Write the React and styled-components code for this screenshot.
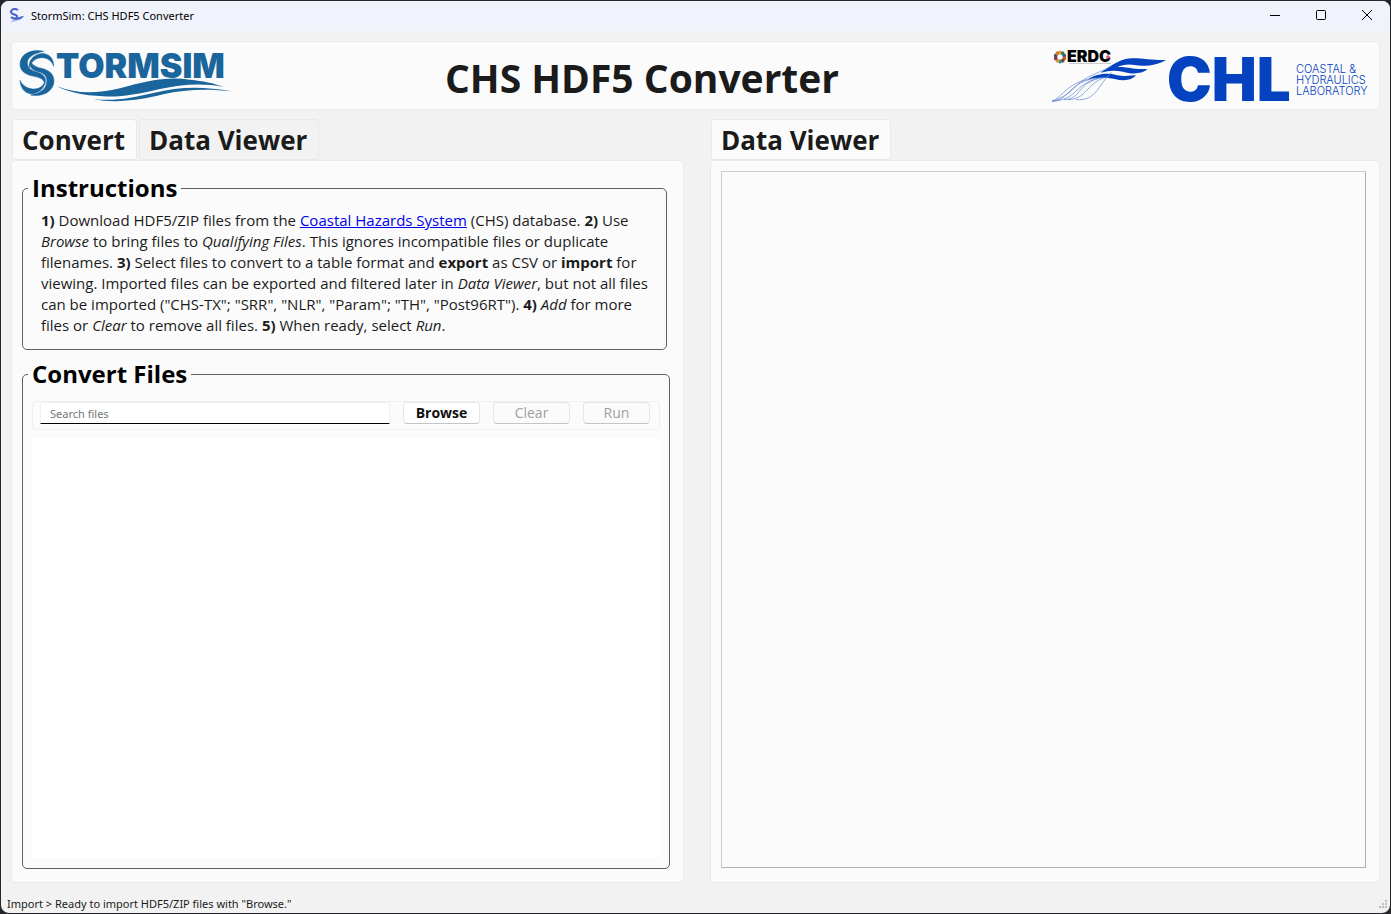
import React from "react";
import styled, { createGlobalStyle } from "styled-components";

const GlobalStyle = createGlobalStyle`
  *, *::before, *::after { box-sizing: border-box; }
  body {
    margin: 0;
    background: #26262a;
    color: #1b1b1b;
    font-family: "Open Sans", "Noto Sans", sans-serif;
  }
`;

const Window = styled.div`
  display: flex;
  flex-direction: column;
  min-height: 100vh;
  border: 1px solid #26262a;
  border-radius: 9px;
  background: #f2f2f2;
  overflow: hidden;
`;

const TitleBar = styled.header`
  display: flex;
  align-items: center;
  height: 30px;
  padding-left: 8px;
  background: #f0f3fb;
  color: #000;
  font-family: "Noto Sans", sans-serif;
  font-size: 11px;
  line-height: 16px;
`;

const WindowTitle = styled.span`
  flex: 1;
  padding-left: 6px;
`;

const WindowButton = styled.button`
  display: flex;
  align-items: center;
  justify-content: center;
  width: 46px;
  height: 28px;
  margin-bottom: 2px;
  padding: 0;
  border: 0;
  background: none;
`;

const Content = styled.main`
  display: flex;
  flex: 1;
  flex-direction: column;
  gap: 9px;
  padding: 10px 10px 0;
`;

const Banner = styled.section`
  display: flex;
  align-items: center;
  justify-content: space-between;
  height: 69px;
  padding: 0 8px;
  border: 1px solid #eaeaea;
  border-radius: 4px;
  background: #fbfbfb;
`;

const BannerTitle = styled.h1`
  margin: 0;
  padding-top: 4px;
  font-size: 39px;
  line-height: 48px;
  white-space: nowrap;
`;

const Columns = styled.div`
  display: grid;
  flex: 1;
  grid-template-columns: 673fr 670fr;
  gap: 26px;
`;

const Column = styled.section`
  display: flex;
  flex-direction: column;
  min-width: 0;
`;

const TabList = styled.div`
  display: flex;
  gap: 2px;
  padding-left: 1px;
`;

const Tab = styled.button`
  height: 41px;
  padding: 0 11px 0 9px;
  border: 1px solid #e8e8e8;
  border-radius: 3px;
  background: ${(p) => (p["aria-selected"] ? "#fbfbfb" : "#f2f2f2")};
  color: inherit;
  font-family: inherit;
  font-size: 26px;
  font-weight: 700;
  line-height: 38px;
  white-space: nowrap;
`;

const Panel = styled.div`
  display: flex;
  flex: 1;
  flex-direction: column;
  gap: 9px;
  padding: ${(p) => (p.$viewer ? "10px 13px 14px 10px" : "12px 13px 13px 10px")};
  border: 1px solid #eaeaea;
  border-radius: 4px;
  background: #fbfbfb;
`;

const Group = styled.fieldset`
  display: flex;
  flex: ${(p) => (p.$grow ? "1" : "none")};
  flex-direction: column;
  gap: 8px;
  min-width: 0;
  margin: ${(p) => (p.$grow ? "0" : "0 3px 0 0")};
  padding: ${(p) => (p.$grow ? "12px 9px 10px" : "7px 18px 13px")};
  border: 1px solid #606060;
  border-radius: 5px;
`;

const GroupTitle = styled.legend`
  margin-left: ${(p) => (p.$grow ? "-4px" : "-13px")};
  padding: 0 4px;
  color: #000;
  font-size: 24px;
  font-weight: 700;
  line-height: 30px;
`;

const Instructions = styled.p`
  margin: 0;
  font-size: 15px;
  line-height: 21px;

  a { color: #0000ee; }
`;

const FileBar = styled.div`
  display: flex;
  align-items: flex-start;
  gap: 13px;
  height: 29px;
  padding: 0 9px 0 7px;
  border: 1px solid #f0f0f0;
  border-radius: 4px;
`;

const Search = styled.input`
  flex: 1;
  min-width: 0;
  height: 22px;
  padding: 0 9px;
  border: 1px solid #f0f0f0;
  border-bottom: 1px solid #000;
  border-radius: 3px 3px 0 0;
  background: #fff;
  font-family: "Noto Sans", sans-serif;
  font-size: 11px;

  &::placeholder { color: #767676; opacity: 1; }
`;

const Action = styled.button`
  width: ${(p) => (p.$narrow ? "67px" : "77px")};
  height: 22px;
  padding: 0;
  border: 1px solid #e6e6e6;
  border-bottom-color: #c4c4c4;
  border-radius: 4px;
  background: #fff;
  color: #111;
  font-family: inherit;
  font-size: 14px;
  font-weight: 700;
  line-height: 20px;

  &:disabled {
    background: #fbfbfb;
    color: #a0a0a0;
    font-weight: 400;
  }
`;

const FileList = styled.div`
  flex: 1;
  border-radius: 3px;
  background: #fff;
`;

const DataFrame = styled.div`
  flex: 1;
  border: 1px solid #cecece;
  border-right-color: #b0b0b0;
  border-bottom-color: #b0b0b0;
`;

const StatusBar = styled.footer`
  display: flex;
  align-items: center;
  justify-content: space-between;
  height: 30px;
  padding: 12px 2px 0 6px;
  font-family: "Noto Sans", sans-serif;
  font-size: 11px;
  line-height: 18px;
`;

const Brand = styled.svg`
  display: block;
  flex: none;
  overflow: visible;
  font-family: Inter, "Liberation Sans", sans-serif;
`;

const swirl = [
  "M90 19C50 10 18 28 18 58C18 82 40 90 60 94C80 98 92 104 92 120C100 98 88 86 68 81C50 76 40 68 40 52C42 36 62 24 90 19Z",
  "M46 68C42 38 72 22 92 26C110 30 119 44 119 64C114 48 100 38 84 38C64 38 52 50 46 68Z",
  "M50 150C86 158 120 138 120 108C120 84 100 74 82 70C68 66 56 62 50 50C44 70 58 76 76 81C94 86 100 98 98 112C96 134 76 146 50 150Z",
  "M18 106C20 136 38 147 56 147C78 142 92 128 92 112C84 126 74 133 56 132C38 130 26 122 18 106Z",
];

function AppIcon() {
  return (
    <svg width="16" height="16" viewBox="0 0 16 16" aria-hidden="true">
      <path d="M9 2C6 0 2 1 2 4C2 7 8 6 8 8.500C8 11 4 11 2 9" fill="none" stroke="#4a62c8" strokeWidth="2" />
      <path d="M2 14C4 13 6 9 10 9C12 9 12 8 15 8C12 13 8 11 5 13Z" fill="#4c6ad0" />
      <path d="M1 15C4 11 6 12 10 12C7 14 4 13 1 15Z" fill="#b8c8ee" />
    </svg>
  );
}

function StormSimLogo() {
  return (
    <Brand width="214" height="54" viewBox="20 48 214 54" fill="#1b659d" role="img" aria-label="StormSim">
      <g transform="translate(14 44) scale(.33333)" stroke="#1b659d" strokeWidth="1.500">
        {swirl.map((d) => <path key={d} d={d} />)}
      </g>
      <text x="56" y="77" fontSize="34" fontWeight="900">TORMSIM</text>
      <g transform="scale(.33333)">
        <path d="M172 256C230 280 290 278 360 262C440 240 500 226 570 236C610 240 640 246 672 258C600 244 540 252 480 264C420 278 360 290 310 286C250 284 200 272 172 256Z" />
        <path d="M280 294C340 302 400 290 460 276C540 256 610 256 696 271C620 262 550 266 490 280C420 298 340 308 280 294Z" />
      </g>
    </Brand>
  );
}

const sealColors = ["#d9a441", "#3f7d46", "#2c5f8a", "#c5542f", "#6f4a2d", "#2f8a9a", "#e0a030", "#a03040", "#34567a", "#d07a30"];

function ChlLogo() {
  return (
    <Brand width="321" height="56" viewBox="1050 47 321 56" fill="#0442bf" role="img" aria-label="ERDC Coastal and Hydraulics Laboratory">
      {sealColors.map((color, i) => (
        <circle key={i} cx="1060" cy="51.500" r="1.900" fill={color} transform={`rotate(${i * 36} 1060 56)`} />
      ))}
      <text x="1067" y="61" fontSize="16" fontWeight="900" fill="#000">ERDC</text>
      <path d="M1069 62.500H1111" stroke="#999" strokeWidth=".5" />
      <circle cx="1108" cy="56" r="1.800" fill="#e4575c" />
      <g transform="translate(1048 44) scale(.33333)">
        <path d="M160 82C185 66 205 50 230 43C262 34 300 46 354 45C330 60 290 66 260 60C225 52 200 72 160 82Z" />
        <path d="M158 84C190 60 225 66 250 70C270 74 285 70 299 73C280 88 250 88 225 80C200 75 180 76 158 84Z" />
        <path d="M118 104C150 84 180 84 205 90C230 95 245 92 264 91C250 108 225 108 200 102C170 96 145 97 118 104Z" />
        <g fill="none" stroke="#5c7fd0" strokeWidth="2">
          <path d="M12 169C42 158 54 116 125 102" />
          <path d="M12 169C66 164 58 116 139 100" />
          <path d="M12 169C90 164 72 122 154 98" />
          <path d="M48 164C104 162 84 110 169 97" />
          <path d="M60 164C122 162 112 110 183 94" />
          <path d="M84 164C146 168 148 122 191 82" />
          <path d="M12 169C54 154 66 142 96 112C126 88 162 82 190 62" />
        </g>
      </g>
      <text x="1167" y="100" fontSize="60" fontWeight="900">CHL</text>
      <g fontSize="11" fontWeight="300">
        <text x="1296" y="72">COASTAL &amp;</text>
        <text x="1296" y="83">HYDRAULICS</text>
        <text x="1296" y="94">LABORATORY</text>
      </g>
    </Brand>
  );
}

function ResizeGrip() {
  return (
    <svg width="10" height="10" viewBox="0 0 10 10" fill="#bdbdbd" aria-hidden="true">
      <path d="M7 1h2v2H7zM4 4h2v2H4zM7 4h2v2H7zM1 7h2v2H1zM4 7h2v2H4zM7 7h2v2H7z" />
    </svg>
  );
}

const windowGlyphs = {
  Minimize: "M0 5.500H10",
  Maximize: "M1.500 .5H8.500Q9.500 .5 9.500 1.500V8.500Q9.500 9.500 8.500 9.500H1.500Q.5 9.500 .5 8.500V1.500Q.5 .5 1.500 .5Z",
  Close: "M0 0L10 10M10 0L0 10",
};

export default function App() {
  return (
    <>
      <GlobalStyle />
      <Window>
        <TitleBar>
          <AppIcon />
          <WindowTitle>StormSim: CHS HDF5 Converter</WindowTitle>
          {Object.entries(windowGlyphs).map(([name, d]) => (
            <WindowButton key={name} type="button" aria-label={name}>
              <svg width="10" height="10" viewBox="0 0 10 10" fill="none" stroke="#000" overflow="visible">
                <path d={d} />
              </svg>
            </WindowButton>
          ))}
        </TitleBar>
        <Content>
          <Banner>
            <StormSimLogo />
            <BannerTitle>CHS HDF5 Converter</BannerTitle>
            <ChlLogo />
          </Banner>
          <Columns>
            <Column>
              <TabList role="tablist">
                <Tab type="button" role="tab" aria-selected={true}>Convert</Tab>
                <Tab type="button" role="tab" aria-selected={false}>Data Viewer</Tab>
              </TabList>
              <Panel role="tabpanel">
                <Group>
                  <GroupTitle>Instructions</GroupTitle>
                  <Instructions>
                    <b>1)</b> Download HDF5/ZIP files from the <a href="#chs">Coastal Hazards System</a> (CHS)
                    database. <b>2)</b> Use <i>Browse</i> to bring files to <i>Qualifying Files</i>. This ignores
                    incompatible files or duplicate filenames. <b>3)</b> Select files to convert to a table format
                    and <b>export</b> as CSV or <b>import</b> for viewing. Imported files can be exported and
                    filtered later in <i>Data Viewer</i>, but not all files can be imported ("CHS-TX"; "SRR",
                    "NLR", "Param"; "TH", "Post96RT"). <b>4)</b> <i>Add</i> for more files or <i>Clear</i> to
                    remove all files. <b>5)</b> When ready, select <i>Run</i>.
                  </Instructions>
                </Group>
                <Group $grow>
                  <GroupTitle $grow>Convert Files</GroupTitle>
                  <FileBar>
                    <Search type="text" aria-label="Search files" placeholder="Search files" />
                    <Action type="button">Browse</Action>
                    <Action type="button" disabled>Clear</Action>
                    <Action type="button" $narrow disabled>Run</Action>
                  </FileBar>
                  <FileList />
                </Group>
              </Panel>
            </Column>
            <Column>
              <TabList role="tablist">
                <Tab type="button" role="tab" aria-selected={true}>Data Viewer</Tab>
              </TabList>
              <Panel $viewer role="tabpanel">
                <DataFrame />
              </Panel>
            </Column>
          </Columns>
        </Content>
        <StatusBar>
          <span>Import &gt; Ready to import HDF5/ZIP files with "Browse."</span>
          <ResizeGrip />
        </StatusBar>
      </Window>
    </>
  );
}
